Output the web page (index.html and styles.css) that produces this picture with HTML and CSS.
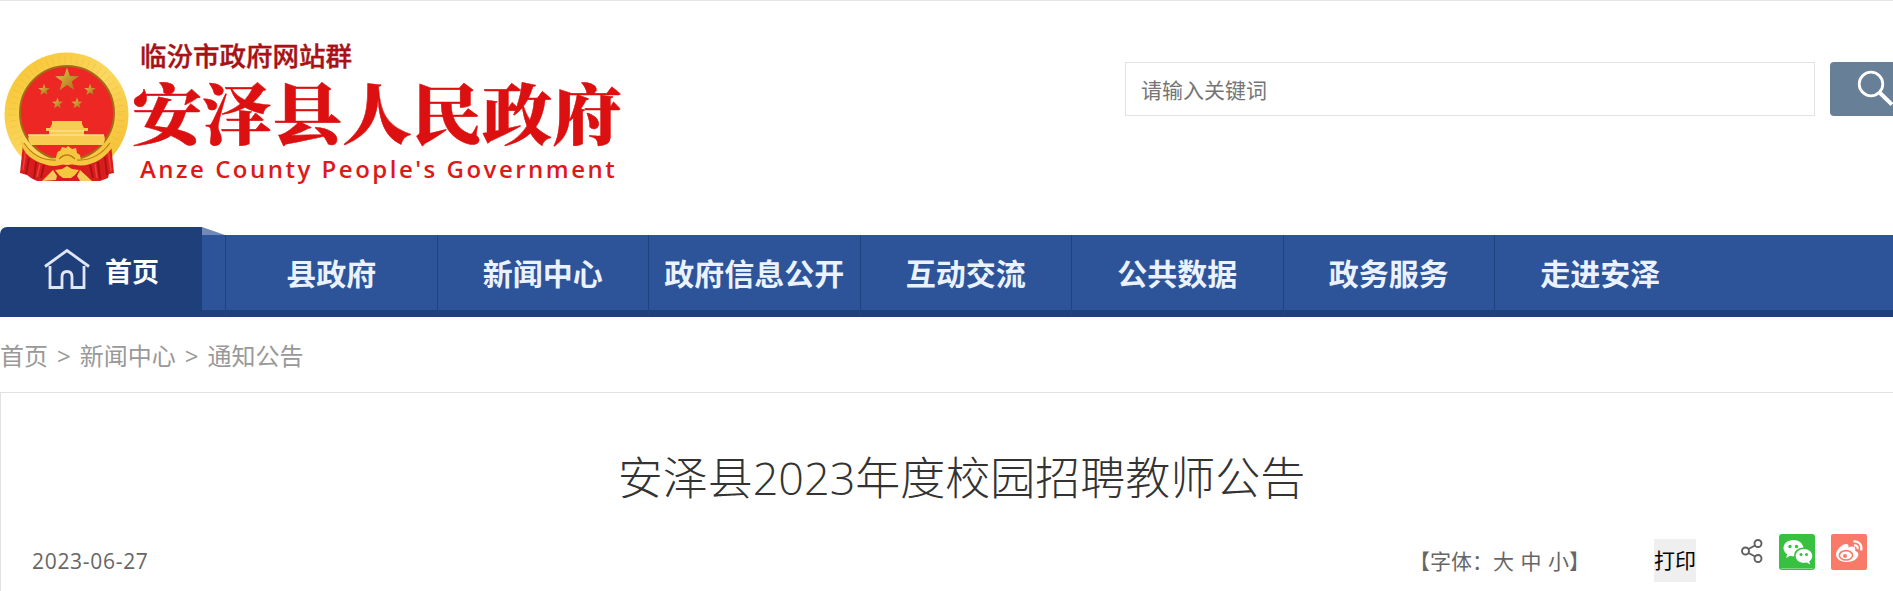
FILE: index.html
```
<!DOCTYPE html>
<html lang="zh-CN">
<head>
  <meta charset="UTF-8" />
  <meta name="viewport" content="width=device-width, initial-scale=1.0"/>
  <title>安泽县2023年度校园招聘教师公告</title>
  <link rel="stylesheet" href="styles.css">
</head>
<body>
  <header class="header">
    <a class="logo" href="#">
      <svg class="emblem" width="126" height="132" viewBox="0 0 126 132">
        <defs>
          <linearGradient id="gold" x1="0" y1="0" x2="1" y2="1">
            <stop offset="0" stop-color="#f6c22c"/>
            <stop offset=".5" stop-color="#fbd860"/>
            <stop offset="1" stop-color="#f4ba28"/>
          </linearGradient>
          <linearGradient id="star" x1="0" y1="0" x2="1" y2="1">
            <stop offset="0" stop-color="#f0c64a"/>
            <stop offset="1" stop-color="#a06a18"/>
          </linearGradient>
          <path id="s" d="M0-10 2.4-3.2 9.5-3.1 3.8 1.2 5.9 8.1 0 4-5.9 8.1-3.8 1.2-9.5-3.1-2.4-3.2z"/>
        </defs>
        <circle cx="62.500" cy="62.500" r="62" fill="url(#gold)"/>
        <circle cx="62.500" cy="62" r="54" fill="none" stroke="#e09a18" stroke-width="8" stroke-dasharray="1 5" opacity=".18"/>
        <circle cx="63" cy="61" r="47" fill="#ec2724" stroke="#a56c18" stroke-width="2"/>
        <g fill="url(#star)">
          <use href="#s" transform="translate(63 28) scale(1.25)"/>
          <use href="#s" transform="translate(40 38) scale(.62)"/>
          <use href="#s" transform="translate(86 38) scale(.62)"/>
          <use href="#s" transform="translate(53.500 51.500) scale(.6)"/>
          <use href="#s" transform="translate(73 51.500) scale(.6)"/>
        </g>
        <path d="M48 69h30v3l2 4h4v3h-4v4h20q2 5-1 10H27q-4-5-2-10h20v-4h-3v-3h4l2-4z" fill="#f8cc52"/>
        <path d="M24 83h76M45 79h35" stroke="#fbe08a" stroke-width="1.500"/>
        <!-- red drapery under the ring -->
        <path d="M19 92q10 13 26 19l18 2 18-2q16-6 26-19l3 29-5 1-1 4-8 3H33l-6-3-4-3-7-2z" fill="#d81d1c"/>
        <path d="M25 106l-3 16M32 110l-2 17M40 113l-3 13M101 105l2 18M94 110l2 17M86 113l3 13" stroke="#a81214" stroke-width="1.800" fill="none"/>
        <path d="M22 96l-3 22M36 112l-3 13M104 97l3 22M91 112l2 14" stroke="#f0413a" stroke-width="1.500" fill="none"/>
        <!-- ribbons and gear -->
        <path d="M17 88q10 14 25 19l10-1q1-8 4-7l2-4 4 1 2-2 4 3 4-1 1 5 3 2 1 5 9-1q15-6 23-19l-1 8q-10 13-22 16-12 4-22-2-13 7-24 2-17-5-22-18z" fill="#f6c640"/>
        <path d="M20 91q12 18 32 17M106 91q-13 18-33 17M55 107q8-8 16 0" stroke="#b98018" stroke-width="1.200" fill="none"/>
        <path d="M51 118l7-1 5-3 5 3 7 1-4 5-4 3H59l-4-3z" fill="#f4c73f"/>
        <path d="M38 129l11-11 4 6-1 4zM88 129l-12-11-3 6 3 5z" fill="#f2cb5a"/>
      </svg>
      <span class="logo-text">
        <span class="logo-group">临汾市政府网站群</span>
        <span class="logo-name">安泽县人民政府</span>
        <span class="logo-en">Anze County People's Government</span>
      </span>
    </a>
    <form class="search">
      <input class="search-input" type="text" placeholder="请输入关键词">
      <button class="search-btn" type="button" aria-label="搜索">
        <svg width="40" height="40" viewBox="0 0 40 40" fill="none" stroke="#fff">
          <circle cx="15" cy="15" r="11.800" stroke-width="2.800"/>
          <path d="M23.500 23.500L36 35.500" stroke-width="4"/>
        </svg>
      </button>
    </form>
  </header>

  <nav class="nav">
    <a class="nav-home" href="#">
      <svg width="46" height="42" viewBox="0 0 46 42" fill="none" stroke="#dfe6f4" stroke-width="2.800">
        <path d="M1 18.500L23 2.500 45 18.500"/>
        <path d="M6 18v21.500h12V29q0-5.500 5-5.500t5 5.500v10.500h12V18"/>
      </svg>
      <span>首页</span>
    </a>
    <svg class="nav-fold" width="23" height="8" viewBox="0 0 23 8"><path d="M0 0L23 8H0z" fill="#7189b9"/></svg>
    <a class="nav-item" href="#">县政府</a>
    <a class="nav-item" href="#">新闻中心</a>
    <a class="nav-item" href="#">政府信息公开</a>
    <a class="nav-item" href="#">互动交流</a>
    <a class="nav-item" href="#">公共数据</a>
    <a class="nav-item" href="#">政务服务</a>
    <a class="nav-item" href="#">走进安泽</a>
  </nav>

  <div class="crumbs">
    <a href="#">首页</a><i>&gt;</i><a href="#">新闻中心</a><i>&gt;</i><a href="#">通知公告</a>
  </div>

  <main class="article">
    <h1 class="title">安泽县2023年度校园招聘教师公告</h1>
    <div class="meta">
      <span class="date">2023-06-27</span>
      <span class="font-size">【字体：<a href="#">大</a> <a href="#">中</a> <a href="#">小</a>】</span>
      <button class="print" type="button">打印</button>
      <div class="share">
        <svg class="share-icon" width="22" height="24" viewBox="0 0 22 24" fill="none" stroke="#606060" stroke-width="1.900">
          <circle cx="4.500" cy="12" r="3.500"/>
          <circle cx="17" cy="4.500" r="3.500"/>
          <circle cx="17" cy="19.500" r="3.500"/>
          <path d="M7.500 10L14 6.500M7.500 14l6.500 3.500"/>
        </svg>
        <svg width="36" height="36" viewBox="0 0 36 36">
          <rect width="36" height="36" rx="3" fill="#38c040"/>
          <path d="M14.500 6C8.700 6 4.500 9.600 4.500 14c0 2.600 1.400 4.700 3.600 6.200L7.200 24l4-2.200c1.300.4 2 .5 3.300.5h.8C14.500 17.500 18.500 13.600 24.500 13.400 23.600 9 19.500 6 14.500 6z" fill="#fff"/>
          <path d="M25 15c-4.600 0-8.300 3-8.300 6.900s3.700 6.900 8.300 6.900c1 0 2-.2 2.900-.4l3.300 2-.9-3.200c1.900-1.300 3-3.100 3-5.300C33.300 18 29.600 15 25 15z" fill="#fff"/>
          <g fill="#38c040"><circle cx="11" cy="12.500" r="1.700"/><circle cx="17.500" cy="12.500" r="1.700"/><circle cx="22" cy="20.500" r="1.500"/><circle cx="27.500" cy="20.500" r="1.500"/></g>
          <path d="M2 34.500h32" stroke="#7ad680"/>
        </svg>
        <svg width="36" height="36" viewBox="0 0 36 36">
          <rect width="36" height="36" rx="2" fill="#f97a68"/>
          <path d="M15 10c2.500 0 3 1.500 2.300 3.500 3-1.300 7.200-1.500 7 1.800-.1 1-.5 1.400.6 1.900 2 .7 2.800 2 2.400 4.100C26.200 25.500 21.500 28 16 28S5 25.500 5 20.500C5 16 11 10 15 10z" fill="#fff"/>
          <ellipse cx="15" cy="21.300" rx="6.600" ry="4.700" fill="none" stroke="#f97a68" stroke-width="1.600"/>
          <circle cx="14" cy="22" r="2" fill="#f97a68"/>
          <path d="M22.500 7.500c5-1 9 3.500 7.700 9M23 11.500c2.500-.5 4.300 1.400 3.600 3.600" fill="none" stroke="#fff" stroke-width="2.200"/>
        </svg>
      </div>
    </div>
  </main>
</body>
</html>
```
FILE: styles.css
```
* {
  box-sizing: border-box;
}

body {
  margin: 0;
  overflow: hidden;
  background: #fff;
  font-family: "Open Sans", "Noto Sans CJK SC", sans-serif;
  border-top: 1px solid #e6e6e6;
}

a {
  color: inherit;
  text-decoration: none;
}

svg {
  display: block;
  flex: none;
}

.header {
  display: flex;
  justify-content: space-between;
  height: 226px;
}

.logo {
  display: flex;
  padding: 51px 0 0 4px;
}

.logo-text {
  display: flex;
  flex-direction: column;
  margin: -12px 0 0 2px;
  white-space: nowrap;
}

.logo-group {
  padding-left: 8px;
  font-size: 26.500px;
  font-weight: 500;
  line-height: 32px;
  color: #a81216;
  -webkit-text-stroke: .4px #a81216;
}

.logo-name {
  font-family: "Noto Serif CJK SC", "Noto Sans CJK SC", serif;
  font-size: 70px;
  font-weight: 900;
  line-height: 78px;
  color: #dc1010;
  transform: scaleY(.94);
  -webkit-text-stroke: .5px #dc1010;
}

.logo-en {
  padding-left: 8px;
  font-size: 24px;
  font-weight: 600;
  line-height: 38px;
  letter-spacing: 2.500px;
  color: #dc1a1a;
}

.search {
  display: flex;
  gap: 15px;
  padding-top: 61px;
  flex: none;
}

.search-input {
  width: 690px;
  height: 54px;
  padding: 2px 15px 0;
  border: 1px solid #e2e2e2;
  font-family: inherit;
  font-size: 21px;
}

.search-input::placeholder {
  color: #757575;
}

.search-btn {
  width: 63px;
  height: 54px;
  padding: 0 0 0 26px;
  border: 0;
  border-radius: 4px 0 0 4px;
  background: #687f98;
  overflow: hidden;
}

.nav {
  display: flex;
  align-items: flex-end;
  height: 90px;
  background: linear-gradient(#fff 8px, #2d5399 8px, #2d5399 83px, #1f3f7b 83px);
}

.nav-home {
  display: flex;
  align-items: center;
  gap: 15px;
  width: 202px;
  height: 90px;
  padding: 0 0 6px 44px;
  border-radius: 7px 0 0 0;
  background: #1f3f7b;
  font-size: 27px;
  font-weight: 700;
  color: #fff;
}

.nav-home span {
  padding-top: 3px;
}

.nav-fold {
  align-self: flex-start;
}

.nav-item {
  width: 211.500px;
  height: 82px;
  padding-bottom: 7px;
  border-left: 1px solid #1f4280;
  font-size: 30px;
  font-weight: 700;
  line-height: 77px;
  text-align: center;
  white-space: nowrap;
  color: #eaf1ff;
}

.crumbs {
  height: 75px;
  font-size: 24px;
  line-height: 77px;
  color: #999;
}

.crumbs i {
  margin: 0 9px;
  font-style: normal;
}

.article {
  width: 1923px;
  height: 220px;
  padding: 54px 30px 0;
  border: 1px solid #e2e2e2;
}

.title {
  margin: 0;
  font-size: 45px;
  font-weight: 300;
  line-height: 62px;
  text-align: center;
  color: #333;
}

.meta {
  display: flex;
  align-items: flex-start;
  padding-top: 23px;
  font-size: 21px;
  line-height: 58px;
  color: #666;
}

.date {
  padding-left: 1px;
  letter-spacing: .7px;
}

.font-size {
  margin-left: auto;
  word-spacing: 1px;
}

.print {
  width: 42px;
  height: 43px;
  margin: 7px 45px 0 64px;
  padding: 0;
  border: 0;
  background: #efefef;
  font-family: inherit;
  font-size: 21px;
  line-height: 43px;
  color: #000;
}

.share {
  display: flex;
  gap: 16px;
  margin: 2px 25px 0 0;
}

.share-icon {
  margin-top: 5px;
}
```
